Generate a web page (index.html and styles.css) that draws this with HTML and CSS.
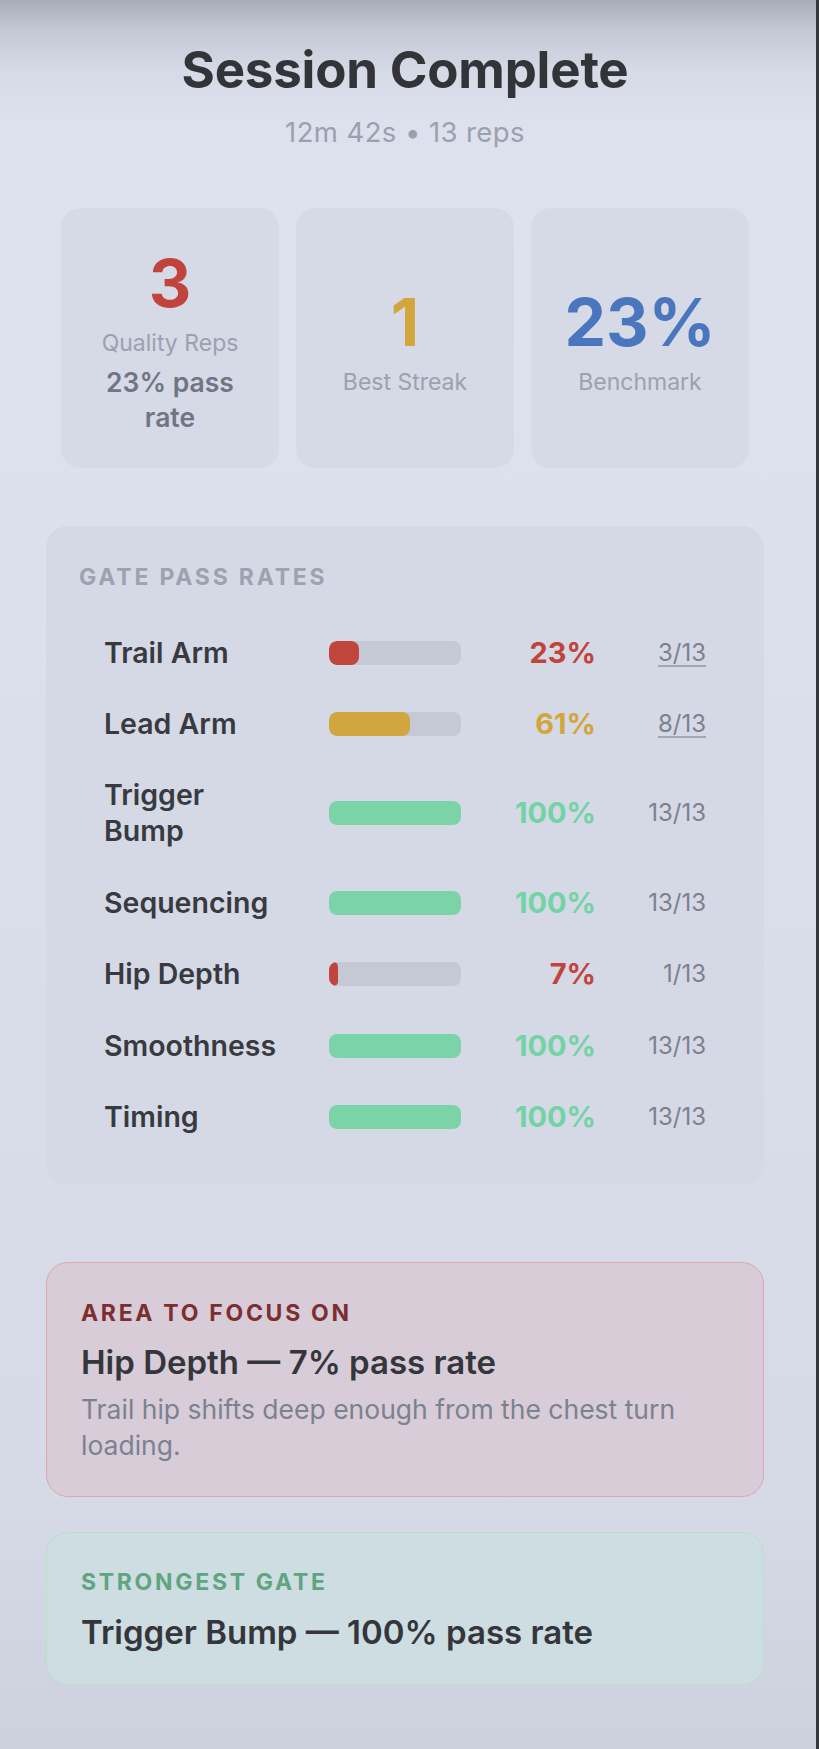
FILE: index.html
```html
<!DOCTYPE html>
<html lang="en">
<head>
  <meta charset="UTF-8">
  <meta name="viewport" content="width=device-width, initial-scale=1.0">
  <title>Session Complete</title>
  <link rel="stylesheet" href="styles.css">
</head>
<body>
  <main class="summary">
    <header class="summary-head">
      <h1>Session Complete</h1>
      <p class="meta">12m 42s • 13 reps</p>
    </header>

    <section class="stats">
      <div class="stat">
        <div class="stat-value red">3</div>
        <div class="stat-label">Quality Reps</div>
        <div class="stat-sub">23% pass rate</div>
      </div>
      <div class="stat">
        <div class="stat-value yellow">1</div>
        <div class="stat-label">Best Streak</div>
      </div>
      <div class="stat">
        <div class="stat-value blue">23%</div>
        <div class="stat-label">Benchmark</div>
      </div>
    </section>

    <section class="gates">
      <h2 class="section-title">Gate Pass Rates</h2>

      <div class="gate-row">
        <span class="gate-name">Trail Arm</span>
        <span class="bar"><span class="fill red" style="width: 23%"></span></span>
        <span class="pct red">23%</span>
        <span class="count linked">3/13</span>
      </div>
      <div class="gate-row">
        <span class="gate-name">Lead Arm</span>
        <span class="bar"><span class="fill yellow" style="width: 61%"></span></span>
        <span class="pct yellow">61%</span>
        <span class="count linked">8/13</span>
      </div>
      <div class="gate-row">
        <span class="gate-name">Trigger Bump</span>
        <span class="bar"><span class="fill green" style="width: 100%"></span></span>
        <span class="pct green">100%</span>
        <span class="count">13/13</span>
      </div>
      <div class="gate-row">
        <span class="gate-name">Sequencing</span>
        <span class="bar"><span class="fill green" style="width: 100%"></span></span>
        <span class="pct green">100%</span>
        <span class="count">13/13</span>
      </div>
      <div class="gate-row">
        <span class="gate-name">Hip Depth</span>
        <span class="bar"><span class="fill red" style="width: 7%"></span></span>
        <span class="pct red">7%</span>
        <span class="count">1/13</span>
      </div>
      <div class="gate-row">
        <span class="gate-name">Smoothness</span>
        <span class="bar"><span class="fill green" style="width: 100%"></span></span>
        <span class="pct green">100%</span>
        <span class="count">13/13</span>
      </div>
      <div class="gate-row">
        <span class="gate-name">Timing</span>
        <span class="bar"><span class="fill green" style="width: 100%"></span></span>
        <span class="pct green">100%</span>
        <span class="count">13/13</span>
      </div>
    </section>

    <section class="note focus">
      <div class="note-label">Area to focus on</div>
      <div class="note-title">Hip Depth — 7% pass rate</div>
      <p class="note-text">Trail hip shifts deep enough from the chest turn loading.</p>
    </section>

    <section class="note strong">
      <div class="note-label">Strongest gate</div>
      <div class="note-title">Trigger Bump — 100% pass rate</div>
    </section>
  </main>
</body>
</html>
```

FILE: styles.css
```css
html {
  background-color: #36373c; /* dark frame edge on the right */
}

body {
  margin: 0 3px 0 0;
  min-height: 1749px;
  font-family: 'Inter', 'Noto Sans', sans-serif;
  color: #34363b;
  background: linear-gradient(to bottom, #a8acb8 0px, #c4c8d4 30px, #d6dae6 70px, #dde1ee 120px, #dde2ef 300px, #d9deea 900px, #d6dae6 1500px, #cdd1dd 1749px);
}

.summary {
  width: 718px;
  margin-left: 46px;
  padding: 40px 0 60px;
}

/* header */

.summary-head {
  text-align: center;
}

.summary-head h1 {
  margin: 0;
  font-size: 51px;
  line-height: 60px;
  font-weight: 700;
  color: #333438;
  letter-spacing: -0.2px;
}

.meta {
  margin: 16px 0 0;
  font-size: 27.5px;
  line-height: 32px;
  letter-spacing: 0.4px;
  color: #9ba0ae;
}

/* stat cards */

.stats {
  display: grid;
  grid-template-columns: repeat(3, 1fr);
  gap: 17px;
  margin-top: 60px;
  padding: 0 15px;
}

.stat {
  display: flex;
  flex-direction: column;
  justify-content: center;
  align-items: center;
  padding: 39px 18px 33px;
  border-radius: 20px;
  background-color: #d5dae6;
  text-align: center;
}

.stat-value {
  font-size: 66px;
  line-height: 72px;
  font-weight: 700;
}

.stat-label {
  margin-top: 9px;
  font-size: 23px;
  line-height: 30px;
  color: #9ba1af;
}

.stat-sub {
  margin-top: 7px;
  font-size: 26.5px;
  line-height: 35px;
  font-weight: 600;
  color: #6f7585;
}

.red { color: #c1443c; }
.yellow { color: #d2a63c; }
.blue { color: #4a76be; }
.green { color: #74d3a6; }

/* gate pass rates */

.gates {
  margin-top: 58px;
  padding: 37px 33px 32px;
  border-radius: 22px;
  background-color: #d4d9e5;
}

.section-title {
  margin: 0 0 26px;
  font-size: 23px;
  line-height: 28px;
  font-weight: 700;
  letter-spacing: 2.8px;
  text-transform: uppercase;
  color: #9ca2b0;
}

.gate-row {
  display: grid;
  grid-template-columns: 225px 132px 135px 110px;
  align-items: center;
  padding: 17.7px 25px;
}

.gate-name {
  padding-right: 47px;
  font-size: 28.5px;
  line-height: 36px;
  font-weight: 600;
  color: #383a40;
}

.bar {
  display: block;
  height: 24px;
  border-radius: 8px;
  background-color: #c5c9d5;
  overflow: hidden;
}

.fill {
  display: block;
  height: 100%;
  border-radius: 8px;
}

.fill.red { background-color: #bf453d; }
.fill.yellow { background-color: #d1a63e; }
.fill.green { background-color: #7bd3a8; }

.pct {
  text-align: right;
  font-size: 29px;
  line-height: 36px;
  font-weight: 700;
}

.count {
  text-align: right;
  font-size: 24px;
  line-height: 36px;
  color: #7d818d;
}

.count.linked {
  text-decoration: underline;
  text-decoration-color: #a3a7b3;
  text-underline-offset: 4px;
}

/* callout cards */

.note {
  border: 1.5px solid;
  border-radius: 22px;
  padding: 36px 34px 33px;
}

.note.focus {
  margin-top: 77px;
  border-color: #dca7ae;
  background-color: #d8ccd9;
}

.note.strong {
  margin-top: 35px;
  padding: 35px 34px 32.5px;
  border-color: #b6e1c9;
  background-color: #cddde1;
}

.note-label {
  font-size: 23px;
  line-height: 28px;
  font-weight: 700;
  letter-spacing: 2.7px;
  text-transform: uppercase;
}

.focus .note-label { color: #7c2f2f; }
.strong .note-label { color: #5fa57f; }

.note-title {
  margin-top: 15px;
  font-size: 33px;
  line-height: 40px;
  font-weight: 600;
  color: #34363b;
}

.strong .note-title {
  margin-top: 16px;
}

.note-text {
  margin: 9px 0 0;
  font-size: 26.5px;
  line-height: 36px;
  color: #7c8190;
}
```
